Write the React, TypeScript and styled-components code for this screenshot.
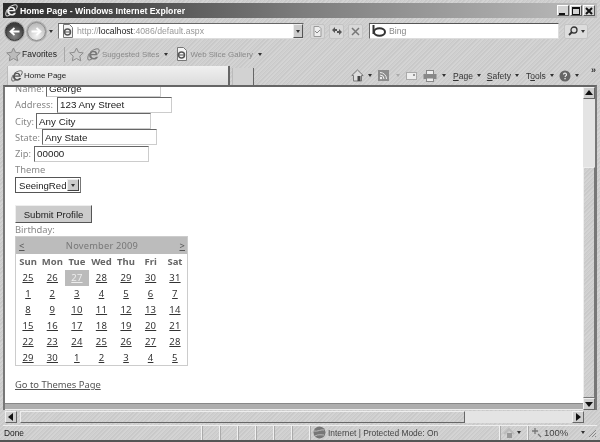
import React from "react";
import styled, { createGlobalStyle } from "styled-components";

const Global = createGlobalStyle`
  html, body { margin: 0; padding: 0; background: #ccc; }
  * { box-sizing: border-box; }
`;

const stipple = `repeating-linear-gradient(135deg, #d4d4d4 0 1px, #c9c9c9 1px 2px, #cfcfcf 2px 3px)`;

const Window = styled.div`
  width: 600px; height: 442px; overflow: hidden; display: flex; flex-direction: column;
  padding-top: 3px; background: ${stipple};
  font-family: "Liberation Sans", Arial, sans-serif; font-size: 8.5px; color: #444;
  border-bottom: 2px solid #555; filter: blur(0.3px);
`;
const TitleBar = styled.div`
  height: 15px; margin: 0 3px; display: flex; align-items: center; padding: 0 2px 0 2px; gap: 2px; flex: none;
  background: linear-gradient(90deg, #2b2b2b 0, #444 100px, #7d7d7d 300px, #bcbcbc 100%);
  color: #fff; font-weight: 700; font-size: 8.7px; font-family: "Liberation Sans", sans-serif;
`;
const TitleText = styled.span` flex: 1; white-space: nowrap; `;
const WinButtons = styled.div` display: flex; gap: 1px; `;
const WinButton = styled.div`
  width: 12px; height: 11px; background: #d4d4d4; border: 1px solid; border-color: #fff #555 #555 #fff;
  display: flex; align-items: center; justify-content: center;
`;
const NavRow = styled.div`
  height: 27px; flex: none; display: flex; align-items: center; padding: 0 3px 1px 5px;
`;
const NavBall = styled.div<{ $dark?: boolean }>`
  width: 19px; height: 19px; border-radius: 50%; flex: none; display: flex; align-items: center; justify-content: center;
  margin-right: 3px; border: 1px solid ${p => (p.$dark ? "#333" : "#8a8a8a")};
  background: ${p => (p.$dark ? "radial-gradient(circle at 50% 75%, #888, #3c3c3c 70%)" : "radial-gradient(circle at 50% 75%, #f2f2f2, #bdbdbd 75%)")};
  box-shadow: 0 0 0 1px #aaa;
`;
const Caret = styled.span<{ $light?: boolean }>`
  display: inline-block; width: 0; height: 0; flex: none;
  border-left: 2.5px solid transparent; border-right: 2.5px solid transparent;
  border-top: 3px solid ${p => (p.$light ? "#aaa" : "#333")};
`;
const AddressBox = styled.div`
  width: 246px; height: 16px; margin-left: 5px; display: flex; align-items: center; background: #fff;
  border: 1px solid; border-color: #666 #ccc #ddd #777; padding-left: 2px; flex: none; font-size: 8.7px; color: #999; white-space: nowrap;
`;
const AddressText = styled.span` margin-left: 3px; `;
const Strong = styled.span` color: #222; `;
const DropBtn = styled.div`
  margin-left: auto; width: 10px; height: 14px; background: #ccc; border: 1px solid; border-color: #eee #555 #555 #eee;
  display: flex; align-items: center; justify-content: center; flex: none;
`;
const MiniBtn = styled.div<{ $ml: number }>`
  width: 15px; height: 15px; margin-left: ${p => p.$ml}px; flex: none; border: 1px solid #c4c4c4; border-radius: 2px;
  background: #d8d8d8; display: flex; align-items: center; justify-content: center;
`;
const SearchBox = styled.div`
  width: 190px; height: 16px; margin-left: 6px; background: #fff; border: 1px solid; border-color: #555 #ddd #ddd #666;
  display: flex; align-items: center; gap: 2px; padding-left: 2px; color: #888; font-size: 8.7px; flex: none;
`;
const SearchGo = styled.div`
  width: 24px; height: 15px; margin-left: 5px; flex: none; border: 1px solid #c4c4c4; border-radius: 2px; background: #ddd;
  display: flex; align-items: center; justify-content: space-between; padding: 0 2px 0 3px;
`;
const FavRow = styled.div`
  height: 21px; flex: none; display: flex; align-items: center; padding: 0 0 3px 6px; white-space: nowrap; font-size: 8.5px;
`;
const FavLabel = styled.span` color: #222; margin-left: 1px; `;
const FavSep = styled.div` width: 1px; height: 15px; background: #a8a8a8; margin: 0 4px 0 7px; `;
const FavItem = styled.span` color: #8a8a8a; margin: 0 5px 0 2px; font-size: 7.9px; `;
const FavGroup = styled.div<{ $ml: number }>` display: flex; align-items: center; margin-left: ${p => p.$ml}px; `;
const TabRow = styled.div` height: 19px; flex: none; display: flex; align-items: flex-end; padding-left: 7px; `;
const Tab = styled.div`
  width: 223px; height: 19px; display: flex; align-items: center; gap: 1px; padding-left: 3px; color: #222; font-size: 8px;
  background: linear-gradient(#f0f0f0, #dcdcdc); border-right: 2px solid #666; border-left: 1px solid #bbb;
`;
const NewTab = styled.div` width: 22px; height: 17px; margin-left: 2px; border-right: 1px solid #666; border-left: 1px solid #bbb; background: #d2d2d2; flex: none; `;
const Tools = styled.div` flex: 1; height: 19px; display: flex; align-items: center; padding-left: 97px; color: #333; white-space: nowrap; position: relative; `;
const ToolItem = styled.span<{ $ml: number }>` display: inline-flex; align-items: center; margin-left: ${p => p.$ml}px; gap: 4px; `;
const Chevron = styled.span` position: absolute; right: 4px; top: -1px; font-size: 9px; font-weight: 700; color: #333; `;
const Under = styled.span` text-decoration: underline; `;
const Viewport = styled.div`
  height: 325px; flex: none; margin: 0 3px; display: flex; border-top: 2px solid #666; border-left: 2px solid #777; border-right: 2px solid #777;
`;
const LeftCol = styled.div` flex: 1; min-width: 0; display: flex; flex-direction: column; `;
const Page = styled.div`
  height: 317px; flex: none; background: #fff; overflow: hidden; padding: 0 0 0 10px; border-bottom: 1px solid #888;
  font-family: "Noto Sans", sans-serif; font-size: 9.4px; color: #888;
`;
const Band = styled.div` flex: 1; background: #aeaeae; border-bottom: 1px solid #eee; `;
const Field = styled.div<{ $top?: number }>`
  display: flex; align-items: center; height: 16.25px; white-space: nowrap; margin-top: ${p => p.$top || 0}px;
`;
const Input = styled.input<{ $ml: number }>`
  width: 115px; height: 16px; margin-left: ${p => p.$ml}px; padding: 0 1px 0 2px; background: #fff; color: #222;
  border: 1px solid; border-color: #666 #ccc #ccc #666; font: 9.8px "Liberation Sans", sans-serif; outline: none;
`;
const ThemeLabel = styled.div` margin-top: 1.5px; line-height: 14px; `;
const SelectBox = styled.div`
  width: 66px; height: 16px; border: 1px solid #555; border-right-color: #777; display: flex; align-items: center;
  justify-content: space-between; color: #222; font: 9.6px "Liberation Sans", sans-serif; padding: 0 1px 0 3px; background: #fff;
`;
const SelectArrow = styled.span`
  width: 12px; height: 12px; background: #ccc; border: 1px solid; border-color: #eee #444 #444 #eee;
  display: flex; align-items: center; justify-content: center;
`;
const SubmitButton = styled.button`
  display: block; margin-top: 12px; width: 77px; height: 18px; padding: 0; background: #ccc; color: #222;
  border: 1px solid; border-color: #eee #555 #555 #eee; font: 9.6px "Liberation Sans", sans-serif;
`;
const BirthLabel = styled.div` line-height: 13px; `;
const Calendar = styled.table`
  width: 173px; border-collapse: collapse; border: 1px solid #ccc; table-layout: fixed; font-family: "Noto Sans", sans-serif; font-size: 9.5px;
  td, th { padding: 0; text-align: center; height: 16px; }
  th { font-weight: 700; color: #666; height: 16px; }
  td { color: #333; text-decoration: underline; letter-spacing: 0.2px; }
`;
const CalHead = styled.td`
  && { height: 17px; background: #bcbcbc; color: #777; text-decoration: none; }
`;
const CalNavBar = styled.div` display: flex; justify-content: space-between; padding: 0 2px 0 3px; font-size: 9.3px; `;
const CalArrow = styled.span` text-decoration: underline; color: #555; `;
const Selected = styled.td`
  && { background: #bbb; color: #eee; }
`;
const ThemeLink = styled.a` display: block; margin-top: 12px; color: #555; text-decoration: underline; line-height: 14px; `;
const VScroll = styled.div` width: 12px; flex: none; display: flex; flex-direction: column; background: #e4e4e4; `;
const ScrollBtn = styled.div<{ $ml?: number }>`
  width: 12px; height: 12px; flex: none; background: #cfcfcf; border: 1px solid; border-color: #f0f0f0 #666 #666 #f0f0f0;
  display: flex; align-items: center; justify-content: center; margin-left: ${p => p.$ml || 0}px;
`;
const VTrack = styled.div` height: 68px; flex: none; `;
const VThumb = styled.div`
  flex: 1; background: ${stipple}; border: 1px solid; border-color: #eee #777 #777 #eee;
`;
const HRow = styled.div` height: 13px; flex: none; margin: 0 5px; display: flex; align-items: center; `;
const HTrack = styled.div` width: 554px; height: 12px; margin-left: 3px; display: flex; background: #e4e4e4; flex: none; `;
const HThumb = styled.div`
  width: 445px; background: ${stipple}; border: 1px solid; border-color: #eee #666 #666 #eee;
`;
const Status = styled.div`
  height: 15px; flex: none; margin: 2px 3px 0; display: flex; align-items: center; font-size: 8.4px; color: #444; white-space: nowrap;
  border-top: 1px solid #eee; padding-bottom: 1px;
`;
const StatusText = styled.div` width: 199px; padding-left: 1px; color: #222; `;
const Cell = styled.div<{ $w: number }>`
  width: ${p => p.$w}px; height: 14px; flex: none; border-left: 1px solid #f0f0f0; box-shadow: inset 1px 0 0 #aaa;
  display: flex; align-items: center; gap: 2px; padding-left: 3px;
`;
const ZoomText = styled.span` font-size: 9.5px; `;
const ZoomCaret = styled.span` margin-left: 11px; display: inline-flex; `;
const Grip = styled.svg` margin-left: auto; flex: none; `;

const IeLogo = ({ size = 13, c = "#555" }: { size?: number; c?: string }) => (
  <svg width={size} height={size} viewBox="0 0 16 16" style={{ flex: "none" }}>
    <path d="M13 9H5.2c.2 2 1.5 3.2 3.1 3.2 1.2 0 2.1-.5 2.7-1.5h2.6c-.9 2.3-3 3.6-5.3 3.6C5 14.300 2.600 12 2.600 9c0-3 2.300-5.500 5.700-5.500 3 0 4.700 2.300 4.700 5.500zM5.200 7.300h5.200C10.200 6 9.500 5.300 8 5.300 6.500 5.300 5.500 6 5.200 7.300z" fill={c} />
    <path d="M4 5C7 2 13 0 14.500 1.500c1 1 .3 3.500-1 5.500M3 6.500C1 9.500.3 13.500 1.500 14.500c1 .8 3-.2 4.500-1" fill="none" stroke={c} strokeWidth="1.200" />
  </svg>
);
const PageIcon = () => (
  <svg width="13" height="14" viewBox="0 0 13 14" style={{ flex: "none" }}>
    <path d="M2.500.5h6l3 3v10h-9z" fill="#f4f4f4" stroke="#777" />
    <circle cx="6.500" cy="8" r="3" fill="none" stroke="#555" strokeWidth="1.500" />
    <path d="M4 8h5" stroke="#555" />
  </svg>
);
const Star = ({ c = "#bbb" }: { c?: string }) => (
  <svg width="15" height="15" viewBox="0 0 15 15" style={{ flex: "none" }}>
    <path d="M7.500 1l2 4.300 4.800.6-3.500 3.200.9 4.700-4.200-2.300-4.200 2.300.9-4.700L.7 5.900l4.800-.6z" fill={c} stroke="#8c8c8c" />
  </svg>
);
const Arrow = ({ color, flip }: { color: string; flip?: boolean }) => (
  <svg width="11" height="9" viewBox="0 0 11 9">
    <path d={flip ? "M10.500 4.500h-8M5.500 1L1.500 4.500 5.500 8" : "M.5 4.500h8M5.500 1l4 3.500-4 3.500"} fill="none" stroke={color} strokeWidth="1.800" />
  </svg>
);
const Tri = ({ dir }: { dir: "u" | "d" | "l" | "r" }) => {
  const pts = { u: "4,1 8,6 0,6", d: "0,2 8,2 4,7", l: "6,0 6,8 1,4", r: "2,0 2,8 7,4" }[dir];
  return <svg width="8" height="8" viewBox="0 0 8 8"><polygon points={pts} fill="#111" /></svg>;
};

const weeks = [
  [25, 26, 27, 28, 29, 30, 31],
  [1, 2, 3, 4, 5, 6, 7],
  [8, 9, 10, 11, 12, 13, 14],
  [15, 16, 17, 18, 19, 20, 21],
  [22, 23, 24, 25, 26, 27, 28],
  [29, 30, 1, 2, 3, 4, 5],
];
const days = ["Sun", "Mon", "Tue", "Wed", "Thu", "Fri", "Sat"];

export default function App() {
  return (
    <Window>
      <Global />
      <TitleBar>
        <IeLogo c="#eee" />
        <TitleText>Home Page - Windows Internet Explorer</TitleText>
        <WinButtons>
          <WinButton><svg width="8" height="8"><rect x="0" y="6" width="6" height="2" fill="#111" /></svg></WinButton>
          <WinButton><svg width="8" height="8"><rect x=".5" y=".5" width="7" height="7" fill="none" stroke="#111" /><rect y="0" width="8" height="2" fill="#111" /></svg></WinButton>
          <WinButton><svg width="8" height="8"><path d="M1 1l6 6M7 1L1 7" stroke="#111" strokeWidth="2" /></svg></WinButton>
        </WinButtons>
      </TitleBar>
      <NavRow>
        <NavBall $dark><Arrow color="#fff" flip /></NavBall>
        <NavBall><Arrow color="#fff" /></NavBall>
        <Caret />
        <AddressBox>
          <PageIcon />
          <AddressText>http://<Strong>localhost</Strong>:4086/default.aspx</AddressText>
          <DropBtn><Caret /></DropBtn>
        </AddressBox>
        <MiniBtn $ml={6}>
          <svg width="11" height="11" viewBox="0 0 11 11"><path d="M2 .5h5l2 2v8H2z" fill="#eee" stroke="#999" /><path d="M3 5l2 2 3-3" fill="none" stroke="#888" /></svg>
        </MiniBtn>
        <MiniBtn $ml={4}>
          <svg width="12" height="10" viewBox="0 0 12 10"><path d="M1 4l3-3v2h2v2H4v2zM11 6L8 9V7H6V5h2V3z" fill="#555" /></svg>
        </MiniBtn>
        <MiniBtn $ml={4}>
          <svg width="9" height="9" viewBox="0 0 9 9"><path d="M1 1l7 7M8 1L1 8" stroke="#777" strokeWidth="1.500" /></svg>
        </MiniBtn>
        <SearchBox>
          <svg width="15" height="12" viewBox="0 0 15 12" style={{ flex: "none" }}><path d="M1.500 0v9" stroke="#333" strokeWidth="2" /><ellipse cx="7.500" cy="7" rx="5.500" ry="3.800" fill="none" stroke="#333" strokeWidth="2" /></svg>
          <span>Bing</span>
        </SearchBox>
        <SearchGo>
          <svg width="10" height="10" viewBox="0 0 10 10"><circle cx="6" cy="4" r="3" fill="none" stroke="#333" strokeWidth="1.300" /><path d="M4 6L1 9" stroke="#333" strokeWidth="1.800" /></svg>
          <Caret />
        </SearchGo>
      </NavRow>
      <FavRow>
        <Star />
        <FavLabel>Favorites</FavLabel>
        <FavSep />
        <Star c="#ccc" />
        <FavGroup $ml={3}><IeLogo size={13} c="#777" /><FavItem>Suggested Sites</FavItem><Caret /></FavGroup>
        <FavGroup $ml={7}><PageIcon /><FavItem>Web Slice Gallery</FavItem><Caret /></FavGroup>
      </FavRow>
      <TabRow>
        <Tab><IeLogo size={12} c="#555" />Home Page</Tab>
        <NewTab />
        <Tools>
          <svg width="13" height="13" viewBox="0 0 13 13" style={{ flex: "none" }}><path d="M6.500 1L.8 6.500h1.700V12h8V6.500h1.700z" fill="#ddd" stroke="#777" /><rect x="6.500" y="7" width="3" height="5" fill="#444" /></svg>
          <ToolItem $ml={4}><Caret /></ToolItem>
          <ToolItem $ml={6}><svg width="11" height="11" viewBox="0 0 11 11"><rect width="11" height="11" fill="#8c8c8c" /><circle cx="3" cy="8" r="1.200" fill="#eee" /><path d="M2 5a4 4 0 0 1 4 4M2 2.500a6.500 6.500 0 0 1 6.500 6.500" fill="none" stroke="#eee" /></svg></ToolItem>
          <ToolItem $ml={7}><Caret $light /></ToolItem>
          <ToolItem $ml={6}><svg width="11" height="8" viewBox="0 0 11 8"><rect x=".5" y=".5" width="10" height="7" fill="#eee" stroke="#aaa" /><rect x="7" y="2" width="2" height="2" fill="#999" /></svg></ToolItem>
          <ToolItem $ml={6}><svg width="14" height="12" viewBox="0 0 14 12"><rect x="3.500" y=".5" width="7" height="4" fill="#eee" stroke="#888" /><rect x=".5" y="4" width="13" height="5" fill="#888" /><rect x="3.500" y="8" width="7" height="3.500" fill="#eee" stroke="#888" /></svg></ToolItem>
          <ToolItem $ml={5}><Caret /></ToolItem>
          <ToolItem $ml={7}><span><Under>P</Under>age</span><Caret /></ToolItem>
          <ToolItem $ml={6}><span><Under>S</Under>afety</span><Caret /></ToolItem>
          <ToolItem $ml={7}><span>T<Under>o</Under>ols</span><Caret /></ToolItem>
          <ToolItem $ml={5}><svg width="12" height="12" viewBox="0 0 12 12"><circle cx="6" cy="6" r="5.500" fill="#666" /><path d="M4.500 4.500a1.500 1.500 0 1 1 2 1.500L6 7" fill="none" stroke="#eee" strokeWidth="1.200" /><rect x="5.400" y="8" width="1.300" height="1.300" fill="#eee" /></svg><Caret /></ToolItem>
          <Chevron>»</Chevron>
        </Tools>
      </TabRow>
      <Viewport>
        <LeftCol>
          <Page>
            <Field $top={-6.5}>Name:<Input $ml={2} defaultValue="George" /></Field>
            <Field>Address:<Input $ml={4} defaultValue="123 Any Street" /></Field>
            <Field>City:<Input $ml={2} defaultValue="Any City" /></Field>
            <Field>State:<Input $ml={2} defaultValue="Any State" /></Field>
            <Field>Zip:<Input $ml={3} defaultValue="00000" /></Field>
            <ThemeLabel>Theme</ThemeLabel>
            <SelectBox>SeeingRed<SelectArrow><Caret /></SelectArrow></SelectBox>
            <SubmitButton>Submit Profile</SubmitButton>
            <BirthLabel>Birthday:</BirthLabel>
            <Calendar>
              <tbody>
                <tr>
                  <CalHead colSpan={7}>
                    <CalNavBar><CalArrow>&lt;</CalArrow><span>November 2009</span><CalArrow>&gt;</CalArrow></CalNavBar>
                  </CalHead>
                </tr>
                <tr>{days.map(d => <th key={d}>{d}</th>)}</tr>
                {weeks.map((w, i) => (
                  <tr key={i}>
                    {w.map((d, j) => (i === 0 && j === 2 ? <Selected key={j}>{d}</Selected> : <td key={j}>{d}</td>))}
                  </tr>
                ))}
              </tbody>
            </Calendar>
            <ThemeLink href="#">Go to Themes Page</ThemeLink>
          </Page>
          <Band />
        </LeftCol>
        <VScroll>
          <ScrollBtn><Tri dir="u" /></ScrollBtn>
          <VTrack />
          <VThumb />
          <ScrollBtn><Tri dir="d" /></ScrollBtn>
        </VScroll>
      </Viewport>
      <HRow>
        <ScrollBtn><Tri dir="l" /></ScrollBtn>
        <HTrack>
          <HThumb />
        </HTrack>
        <ScrollBtn $ml={-2}><Tri dir="r" /></ScrollBtn>
      </HRow>
      <Status>
        <StatusText>Done</StatusText>
        <Cell $w={18} /><Cell $w={18} /><Cell $w={18} /><Cell $w={18} /><Cell $w={18} /><Cell $w={18} />
        <Cell $w={190}>
          <svg width="13" height="13" viewBox="0 0 13 13" style={{ flex: "none" }}><circle cx="6.500" cy="6.500" r="6" fill="#777" /><path d="M1 5c3 1 8-2 10-1M2 10c3-2 7-1 9-1" stroke="#bbb" fill="none" /></svg>
          <span>Internet | Protected Mode: On</span>
        </Cell>
        <Cell $w={28}>
          <svg width="12" height="12" viewBox="0 0 12 12" style={{ flex: "none" }}><path d="M1 7l5-5 5 5" fill="none" stroke="#bbb" strokeWidth="2" /><rect x="4" y="6" width="5" height="5" fill="#999" /></svg>
          <Caret />
        </Cell>
        <Cell $w={60}>
          <svg width="11" height="11" viewBox="0 0 11 11" style={{ flex: "none" }}><path d="M4 1v6M1 4h6M7 7l3 3" stroke="#777" strokeWidth="1.300" /></svg>
          <ZoomText>100%</ZoomText>
          <ZoomCaret><Caret /></ZoomCaret>
        </Cell>
        <Grip width="10" height="10" viewBox="0 0 10 10"><path d="M9 2L2 9M9 5L5 9M9 8L8 9" stroke="#888" /></Grip>
      </Status>
    </Window>
  );
}
